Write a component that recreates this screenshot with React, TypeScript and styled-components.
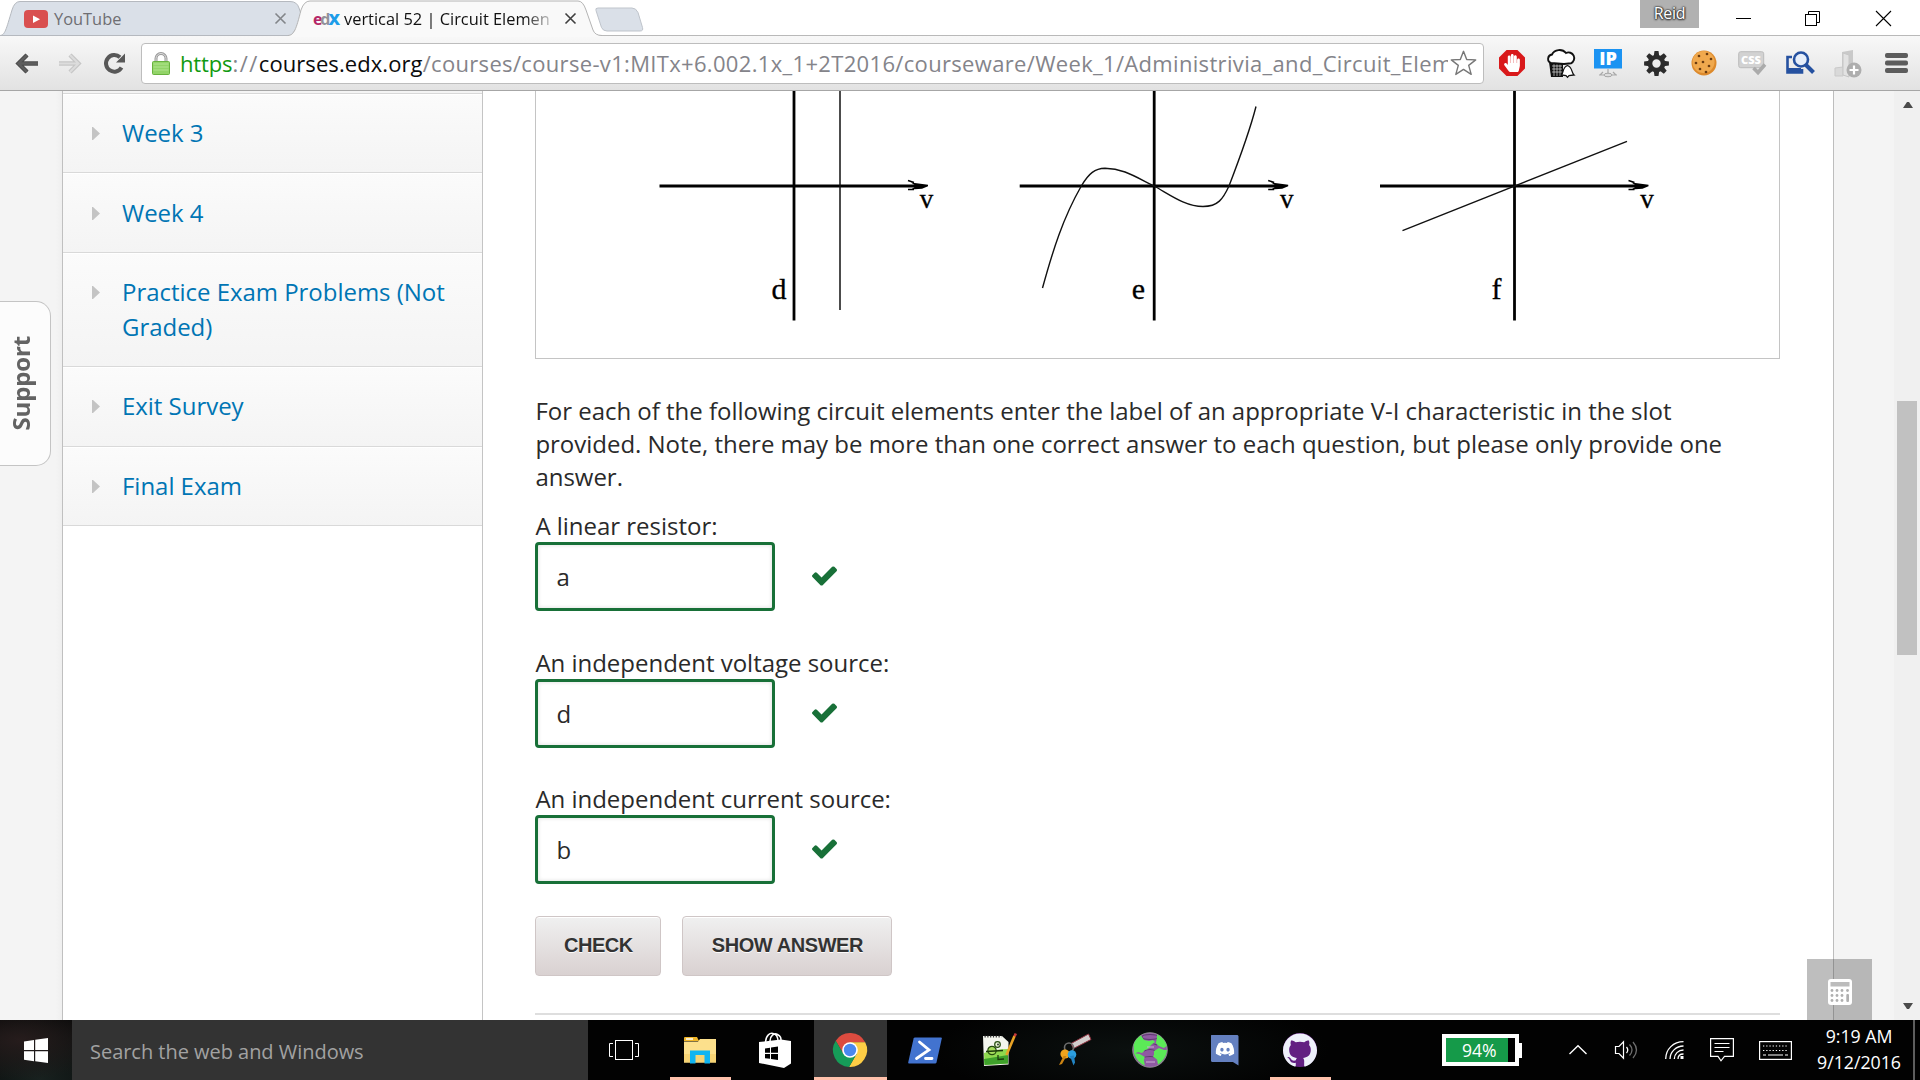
import React from 'react';
import styled, { createGlobalStyle } from 'styled-components';
import { FaHandPaper, FaDiscord } from 'react-icons/fa';
import { SiGithub } from 'react-icons/si';

const Global = createGlobalStyle`
  *, *::before, *::after { box-sizing: border-box; }
  body { margin: 0; background: #fff; overflow: hidden; }
  svg { display: block; flex: none; overflow: visible; }
`;

const sans = `"Open Sans", "Noto Sans", sans-serif`;

const Desktop = styled.div`
  width: 1920px;
  height: 1080px;
  display: flex;
  flex-direction: column;
  overflow: hidden;
  font-family: ${sans};
`;

/* ---------- tab strip ---------- */

const TabStrip = styled.header`
  height: 36px;
  flex: none;
  display: flex;
  justify-content: space-between;
  background: #fff;
  border-bottom: 1px solid #b9b9b9;
`;

const Tabs = styled.div`
  display: flex;
  height: 36px;
`;

const Tab = styled.div<{ $active?: boolean }>`
  position: relative;
  z-index: ${p => (p.$active ? 2 : 1)};
  width: ${p => (p.$active ? 314 : 303)}px;
  margin-left: ${p => (p.$active ? -15 : 0)}px;
  padding: 0 ${p => (p.$active ? 26 : 17)}px 0 ${p => (p.$active ? 25 : 24)}px;
  height: 37px;
  display: flex;
  align-items: center;
  color: ${p => (p.$active ? '#111' : '#6e6e72')};
`;

const TabShape = styled.svg`
  position: absolute;
  left: 0;
  top: 0;
  z-index: -1;
`;

const TabTitle = styled.span<{ $fade?: boolean }>`
  flex: 1;
  margin-left: 6px;
  white-space: nowrap;
  font-size: 16.4px;
  line-height: 24px;
  ${p => p.$fade && 'margin-right: 12px; -webkit-mask-image: linear-gradient(90deg, #000 86%, rgba(0,0,0,.15) 100%); mask-image: linear-gradient(90deg, #000 86%, rgba(0,0,0,.15) 100%);'}
`;

const EdxMark = styled.span`
  width: 25px;
  display: flex;
  font: 700 16px/20px ${sans};
  letter-spacing: -1.1px;
  i { font-style: normal; }
  i:nth-child(1) { color: #b52667; }
  i:nth-child(2) { color: #93929a; margin-left: -1px; }
  i:nth-child(3) { color: #1d9de9; margin-left: -1px; font-weight: 800; }
`;

const WindowControls = styled.div`
  display: flex;
  align-items: flex-start;
  height: 35px;
`;

const UserBadge = styled.div`
  width: 59px;
  height: 28px;
  background: #b1b1b1;
  color: #fff;
  font-size: 16px;
  line-height: 26px;
  text-align: center;
  letter-spacing: -0.3px;
  text-shadow: 0 0 2px #333, 0 0 2px #333, 0 1px 2px #333, 1px 0 1px #555;
`;

const ControlSlot = styled.div<{ $w: number }>`
  width: ${p => p.$w}px;
  height: 36px;
  display: flex;
  align-items: center;
  justify-content: center;
`;

const CloseSlot = styled(ControlSlot)`
  padding-left: 10px;
`;

/* ---------- toolbar ---------- */

const Toolbar = styled.div`
  height: 55px;
  flex: none;
  display: flex;
  align-items: center;
  background: linear-gradient(#f8f8f8, #e2e2e2);
  border-bottom: 1px solid #a6a6a6;
`;

const NavButtons = styled.div`
  width: 141px;
  padding-left: 15px;
  display: flex;
  align-items: center;
`;

const ForwardWrap = styled.span`
  margin: 0 22px 0 19px;
`;

const Omnibox = styled.div`
  width: 1343px;
  height: 41px;
  display: flex;
  align-items: center;
  background: #fff;
  border: 1px solid #bdbdbd;
  border-radius: 4px;
  padding: 0 6px 0 10px;
`;

const Url = styled.span`
  flex: 1;
  min-width: 0;
  margin: 0 2px 0 10px;
  overflow: hidden;
  white-space: nowrap;
  font-size: 22px;
  line-height: 34px;
  letter-spacing: 0.33px;
  color: #84848a;
  b { font-weight: 400; color: #0b0b0b; letter-spacing: 0.08px; }
  em { font-style: normal; color: #109a10; letter-spacing: -0.15px; }
  i { font-style: normal; letter-spacing: 1.5px; }
`;

const Extensions = styled.div`
  flex: 1;
  padding-left: 4px;
  display: flex;
  align-items: center;
`;

const Ext = styled.div`
  width: 48px;
  height: 30px;
  display: flex;
  align-items: center;
  justify-content: center;
`;

const StopBadge = styled.span`
  width: 26px;
  height: 26px;
  display: flex;
  align-items: center;
  justify-content: center;
  color: #fff;
  background: #d9191b;
  clip-path: polygon(29% 0, 71% 0, 100% 29%, 100% 71%, 71% 100%, 29% 100%, 0 71%, 0 29%);
`;

/* ---------- page ---------- */

const Page = styled.div`
  flex: 1;
  min-height: 0;
  display: flex;
  background: #f4f4f4;
`;

const LeftGutter = styled.div`
  width: 62px;
  padding-top: 210px;
  background: linear-gradient(90deg, #f4f4f4 90%, #efefef);
`;

const SupportTab = styled.div`
  width: 51px;
  height: 165px;
  border: 1px solid #c4c4c4;
  border-left: 0;
  border-radius: 0 15px 15px 0;
  background: #fcfcfc;
  display: flex;
  align-items: center;
  justify-content: center;
  padding-right: 8px;
`;

const SupportLabel = styled.span`
  writing-mode: vertical-rl;
  transform: rotate(180deg);
  font-size: 24px;
  font-weight: 700;
  letter-spacing: -0.15px;
  line-height: 32px;
  color: #636363;
`;

const Sidebar = styled.nav`
  width: 420.5px;
  border-left: 1px solid #c0c0c0;
  border-right: 1px solid #c4c4c4;
  background: #fff;
`;

const SidebarEdge = styled.div`
  height: 3px;
  background: #f4f4f4;
  border-bottom: 1px solid #d8d8d8;
`;

const Chapter = styled.a`
  display: flex;
  padding: 21.3px 24px 22.1px 29px;
  border-bottom: 1px solid #d9d9d9;
  box-shadow: inset 0 1px 0 #fff;
  background: linear-gradient(#fbfbfb, #f4f4f4);
  color: #0075b4;
  font-size: 24px;
  line-height: 35px;
  letter-spacing: -0.03px;
`;

const Caret = styled.svg`
  margin: 12px 22px 0 0;
`;

const ChapterTitle = styled.span`
  flex: 1;
`;

const Content = styled.main`
  width: 1351.5px;
  padding-left: 52.9px;
  background: #fff;
  border-right: 1px solid #bdbdbd;
  color: #2a2a2a;
`;

const Figure = styled.div`
  width: 1245px;
  height: 268px;
  border: 1px solid #c4c4c4;
  border-top: 0;
`;

const Prompt = styled.p`
  margin: 35px 0 16.4px;
  width: 1245px;
  font-size: 24px;
  line-height: 33px;
  letter-spacing: -0.02px;
`;

const Question = styled.label`
  display: block;
  font-size: 24px;
  line-height: 33px;
  height: 136.4px;
  letter-spacing: -0.02px;
`;

const AnswerRow = styled.span`
  display: flex;
  align-items: center;
`;

const AnswerBox = styled.span`
  width: 240px;
  height: 69px;
  padding: 0 18px;
  border: 3px solid #187038;
  border-radius: 4px;
  box-shadow: inset 0 0 4px rgba(0, 0, 0, 0.14);
  line-height: 64px;
`;

const CheckMark = styled.svg`
  margin: -1px 0 0 36.6px;
`;

const Actions = styled.div`
  display: flex;
  gap: 21px;
  margin-top: -2.6px;
`;

const ActionButton = styled.button<{ $w: number }>`
  width: ${p => p.$w}px;
  height: 60px;
  padding: 0 0 1.5px 0;
  border: 1px solid #cfc6c6;
  border-radius: 4px;
  background: linear-gradient(#f0f0f0, #d9d1d1);
  box-shadow: inset 0 1px 0 #fff;
  color: #333;
  font: 700 20px "Liberation Sans", Arial, sans-serif;
  letter-spacing: -0.42px;
  text-shadow: 0 1px 0 #fcfbfb;
  white-space: nowrap;
`;

const Divider = styled.hr`
  width: 1245px;
  margin: 37px 0 0;
  border: 0;
  height: 2px;
  background: #dedede;
`;

const RightGutter = styled.aside`
  flex: 1;
  display: flex;
  align-items: flex-end;
`;

const CalculatorTab = styled.div`
  position: relative;
  width: 65px;
  height: 61px;
  margin-left: -27px;
  background: rgba(70, 70, 70, 0.35);
  display: flex;
  justify-content: center;
  padding-top: 20px;
`;

const Scrollbar = styled.div`
  width: 26px;
  background: #f0f0f0;
  display: flex;
  flex-direction: column;
  align-items: center;
  justify-content: space-between;
  padding: 11px 0;
  padding-left: 2px;
`;

const ScrollThumb = styled.div`
  width: 20px;
  height: 254px;
  margin: 293px 2px auto 0;
  background: #c1c1c1;
`;

/* ---------- taskbar ---------- */

const Taskbar = styled.footer`
  height: 60px;
  flex: none;
  display: flex;
  background:
    radial-gradient(ellipse 200px 50px at 1130px 30px, #0b100f, transparent),
    radial-gradient(ellipse 90px 40px at 20px 20px, #261c1c, transparent),
    radial-gradient(ellipse 120px 80px at 40px 60px, #18211f, transparent),
    #020202;
`;

const StartButton = styled.div`
  width: 72px;
  display: flex;
  align-items: center;
  justify-content: center;
`;

const SearchBox = styled.div`
  width: 516px;
  padding-left: 18px;
  background: #333;
  color: #a2a2a2;
  font-size: 20px;
  line-height: 63px;
  letter-spacing: -0.03px;
`;

const Apps = styled.div`
  flex: 1;
  display: flex;
  padding-left: 1px;
  gap: 2px;
`;

const AppButton = styled.div<{ $focus?: boolean; $open?: boolean }>`
  width: 73px;
  height: 60px;
  padding-right: 2px;
  display: flex;
  align-items: center;
  justify-content: center;
  background: ${p => (p.$focus ? '#343434' : 'none')};
  ${p => p.$focus && 'box-shadow: inset 0 -3px 0 #ffc1ab;'}
  ${p => p.$open && 'background: linear-gradient(#ffc1ab, #ffc1ab) 6px 57px / 61px 3px no-repeat;'}
`;

const Tray = styled.div`
  width: 480px;
  display: flex;
  align-items: center;
  padding-left: 2px;
`;

const Battery = styled.div`
  display: flex;
  align-items: center;
  width: 112px;
`;

const BatteryBody = styled.div`
  width: 77px;
  height: 32px;
  border: 4px solid #fff;
  background: linear-gradient(90deg, #159a49 62px, #000 62px);
  color: #fff;
  font-size: 17.6px;
  line-height: 24px;
  padding-left: 16px;
`;

const BatteryTip = styled.div`
  width: 3px;
  height: 15px;
  background: #fff;
`;

const TraySlot = styled.div<{ $w: number }>`
  width: ${p => p.$w}px;
  display: flex;
  justify-content: center;
`;

const Clock = styled.div`
  width: 108px;
  color: #fff;
  font-size: 17.8px;
  line-height: 26px;
  text-align: center;
  padding-bottom: 3px;
  letter-spacing: -0.05px;
`;

const PeekLine = styled.div`
  width: 2px;
  height: 60px;
  background: #5d5d5d;
`;

/* ---------- drawings ---------- */

const Close = ({ color, size = 11 }: { color: string; size?: number }) => (
  <svg width={size} height={size} viewBox="0 0 11 11">
    <path d="M.5.5l10 10M10.5.5l-10 10" stroke={color} strokeWidth="1.6" />
  </svg>
);

const BackArrow = ({ color, edge }: { color: string; edge: string }) => (
  <svg width="24" height="21" viewBox="0 0 24 21">
    <path d="M12 2L3.500 10.500L12 19M4 10.500H23" fill="none" stroke={color} strokeWidth="4.400" />
    <path d="M12 2L3.500 10.500L12 19M4 10.500H23" fill="none" stroke={edge} strokeWidth="2.400" />
  </svg>
);

const Reload = () => (
  <svg width="22" height="21" viewBox="0 0 22 21">
    <path d="M17.500 14.500A8.300 8.300 0 1 1 16 4.300" fill="none" stroke="#585858" strokeWidth="4" />
    <path d="M21 .5V9.500H12Z" fill="#585858" />
  </svg>
);

const Lock = () => (
  <svg width="18" height="23" viewBox="0 0 18 23">
    <path d="M4 11V6.500a5 5 0 0 1 10 0V11" fill="none" stroke="#9a9a9a" strokeWidth="3" />
    <path d="M4 11V6.500a5 5 0 0 1 10 0V11" fill="none" stroke="#dedede" strokeWidth="1" />
    <rect x=".5" y="9.500" width="17" height="13" rx="1" fill="#92d468" stroke="#68b23e" />
    <path d="M1.500 12h15M1.500 15h15M1.500 18h15" stroke="#b2e48f" strokeWidth="1" />
  </svg>
);

const Star = () => (
  <svg width="27" height="26" viewBox="0 0 27 26">
    <path d="M13.500 1.300l3.200 8.200 9 .4-7 5.500 2.500 9-7.700-5-7.700 5 2.500-9-7-5.500 9-.4z" fill="#fff" stroke="#777" strokeWidth="1.400" strokeLinejoin="round" />
  </svg>
);

const Storm = () => (
  <svg width="29" height="29" viewBox="0 0 29 29">
    <path d="M3 13h14v15H5z" fill="#111" />
    <path d="M6 17h10M6 20h10M6 23h10M8 15v12M11 15v12M14 15v12" stroke="#ddd" strokeWidth=".7" />
    <path d="M5 14a4.400 4.400 0 0 1 1-8.500A8 7 0 0 1 20 4a5.500 5.500 0 0 1 5 10.300L18 15z" fill="#fff" stroke="#111" strokeWidth="1.900" />
    <path d="M15.500 26c2-2 1-8 6-9.500 5 1.500 4 7.500 6.500 9.500l-5 .5-1.500 1.800-1.500-1.800z" fill="#fff" stroke="#111" strokeWidth="1.300" />
  </svg>
);

const IpScreen = () => (
  <svg width="28" height="29" viewBox="0 0 28 29">
    <rect width="28" height="19.500" fill="#1b93f2" />
    <text x="14" y="16" textAnchor="middle" fontFamily="Open Sans" fontWeight="800" fontSize="18" fill="#fff">IP</text>
    <path d="M14 20v8M5 26h18M9 23l-3 3M19 23l3 3" stroke="#a9a9a9" strokeWidth="1.200" />
    <ellipse cx="14" cy="26" rx="4" ry="1.800" fill="#ddd" stroke="#999" strokeWidth=".8" />
  </svg>
);

const Gear = () => (
  <svg width="25" height="25" viewBox="-12.500 -12.500 25 25">
    {[0, 45, 90, 135, 180, 225, 270, 315].map(a => (
      <path key={a} d="M-2.800-7L-2-12.400H2L2.800-7z" fill="#2c2c2c" transform={`rotate(${a})`} />
    ))}
    <circle r="6.500" fill="none" stroke="#2c2c2c" strokeWidth="4.600" />
  </svg>
);

const Cookie = () => (
  <svg width="26" height="26" viewBox="0 0 26 26">
    <circle cx="13" cy="13" r="12.500" fill="#dd8a2c" />
    <circle cx="12.500" cy="12" r="11" fill="#f0a94e" />
    {[[8, 6], [16, 4], [20, 9], [12, 12], [5, 13], [18, 16], [9, 19], [15, 22]].map(([x, y]) => (
      <circle key={`${x}-${y}`} cx={x} cy={y} r="1.350" fill="#6b3c10" />
    ))}
  </svg>
);

const CssBadge = () => (
  <svg width="28" height="24" viewBox="0 0 28 24">
    <rect x=".7" y=".7" width="25" height="16" rx="2" fill="#d2d2d2" stroke="#bcbcbc" />
    <text x="13" y="13" textAnchor="middle" fontFamily="Open Sans" fontWeight="800" fontSize="11" fill="#fff">CSS</text>
    <path d="M15.500 17l4.500 4.500 7-8" fill="none" stroke="#ababab" strokeWidth="3.600" />
  </svg>
);

const Finder = () => (
  <svg width="29" height="24" viewBox="0 0 29 24">
    <path d="M6 6H1.500v15.500H16V18" fill="none" stroke="#2551a0" strokeWidth="2.600" />
    <path d="M2 17h13v4H2z" fill="#2551a0" />
    <circle cx="15" cy="8.500" r="7" fill="#e6eefa" stroke="#2551a0" strokeWidth="2.600" />
    <path d="M20 14l7.500 7.500" stroke="#2551a0" strokeWidth="4" />
  </svg>
);

const FolderPlus = () => (
  <svg width="28" height="29" viewBox="0 0 28 29">
    <path d="M8 3l11-2v22H8z" fill="#c9c9c9" />
    <path d="M1 19l8-1v9H1z" fill="#d9d9d9" stroke="#c9c9c9" />
    <path d="M9 4l6 2v22l-6-2z" fill="#e2e2e2" stroke="#c6c6c6" />
    <circle cx="20" cy="21" r="7.500" fill="#aeaeae" />
    <path d="M20 16.500v9M15.500 21h9" stroke="#fff" strokeWidth="2.200" />
  </svg>
);

const MenuBars = () => (
  <svg width="23" height="20" viewBox="0 0 23 20">
    {[0, 7.500, 15].map(y => <rect key={y} y={y} width="23" height="5" rx="2" fill="#5c5c5c" />)}
  </svg>
);

const Axes = ({ x, label, lx }: { x: number; label: string; lx: number }) => (
  <g>
    <path d={`M${x} 91V320.500`} stroke="#000" strokeWidth="2.800" />
    <path d={`M${x - 134.500} 186H${x + 128}`} stroke="#000" strokeWidth="2.800" />
    <path d={`M${x + 114} 180.500L${x + 120} 182.500M${x + 120} 189.500H${x + 114}`} fill="none" stroke="#000" strokeWidth="1.500" />
    <path d={`M${x + 117} 182.500L${x + 134} 184.800V186.300L${x + 128} 188.800L${x + 117} 189.500L${x + 122} 186z`} />
    <text x={x + 132.500} y="208" textAnchor="middle" fontSize="27" stroke="#000" strokeWidth=".3">v</text>
    <text x={lx} y="298.500" textAnchor="middle" fontSize="30" stroke="#000" strokeWidth=".3">{label}</text>
  </g>
);

const Characteristics = () => (
  <svg width="1243" height="267" viewBox="537 91 1243 267" fontFamily='"Liberation Serif", serif'>
    <Axes x={795} label="d" lx={780} />
    <path d="M841 91V310" stroke="#111" strokeWidth="1.500" />
    <Axes x={1155.200} label="e" lx={1139.500} />
    <path
      d="M1043.500 288C1054 250 1064 218 1082.300 186C1090 173 1096 168.500 1106 168.300C1124 168.500 1135 176 1155 186C1170 194 1186 206.500 1204 206.500C1219 206.500 1224 199 1230 186C1240 160 1251 130 1257 106.500"
      fill="none" stroke="#111" strokeWidth="1.400"
    />
    <Axes x={1515.500} label="f" lx={1497.500} />
    <path d="M1403.500 230.700L1628 141.300" stroke="#111" strokeWidth="1.400" />
  </svg>
);

const Check = () => (
  <CheckMark width="25" height="20" viewBox="121 334 1550 1188">
    <path fill="#187038" d="M1671 566q0 40-28 68l-724 724-136 136q-28 28-68 28t-68-28l-136-136-362-362q-28-28-28-68t28-68l136-136q28-28 68-28t68 28l294 295 656-657q28-28 68-28t68 28l136 136q28 28 28 68z" />
  </CheckMark>
);

const Calculator = () => (
  <svg width="24" height="26" viewBox="0 0 24 26">
    <rect width="24" height="26" rx="3" fill="#fff" />
    <rect x="2.500" y="3" width="19" height="4.500" fill="#bcbcbc" />
    {[11.500, 16.500, 21.500].map(y => [4, 9, 14].map(x => <circle key={`${x}-${y}`} cx={x} cy={y} r="1.400" fill="#b0b0b0" />))}
    <circle cx="19.500" cy="11.500" r="1.400" fill="#b0b0b0" />
    <rect x="18.300" y="15" width="2.700" height="8" rx="1" fill="#b0b0b0" />
  </svg>
);

const WindowsLogo = () => (
  <svg width="24" height="25" viewBox="0 0 24 25" fill="#fff">
    <path d="M0 3.500L10 2v10H0zM11.200 1.800L24 0v12H11.200zM0 13.200h10v10L0 21.800zM11.200 13.200H24V25l-12.800-1.800z" />
  </svg>
);

const TaskView = () => (
  <svg width="32" height="20" viewBox="0 0 32 20" fill="none" stroke="#fff">
    <rect x="6.500" y=".5" width="17" height="19" />
    <path d="M4 3.500H.5v13H4M26 3.500h3.500v13H26" />
  </svg>
);

const Folder = () => (
  <svg width="32" height="27" viewBox="0 0 32 27">
    <path d="M0 1q0-1 1-1h12l2 4H0z" fill="#f0b62a" />
    <path d="M2 2h7" stroke="#fff" strokeWidth="1.500" />
    <path d="M0 4.500h14l2-2.500h16V25.500H0z" fill="#fce08c" />
    <path d="M0 17h32v8.500H0z" fill="#f7d474" />
    <path d="M6 26.500V13.500h20v13h-5.500v-8.500h-9v8.500z" fill="#12b5f0" />
  </svg>
);

const StoreBag = () => (
  <svg width="32" height="36" viewBox="0 0 32 36">
    <path d="M6.500 10C7 3 11 .8 14 1.500s5 4 5 8M11 9c0-5 4-8.500 7.500-6.500S22 6 22 9" fill="none" stroke="#fff" strokeWidth="1.500" />
    <path d="M0 10l22-2.500 10 1.500v22.500L25 36 0 31z" fill="#fff" />
    <path d="M6 16.500l5-.7v5H6zM12 15.600l7-1v6.200h-7zM6 22h5v4.800l-5-.6zM12 22h7v6l-7-1z" fill="#000" />
  </svg>
);

const ChromeLogo = () => (
  <svg width="34" height="34" viewBox="-17 -17 34 34">
    {[['#db4b3f', 0], ['#fdcd45', 120], ['#169c58', 240]].map(([c, a]) => (
      <path key={c} fill={c as string} transform={`rotate(${a})`} d="M15.200-7.700A17 17 0 0 0-14.270-9.310L-6.670 3.850L0 0V-7.700z" />
    ))}
    <circle r="7.800" fill="#fff" />
    <circle r="6.200" fill="#4a88ee" />
  </svg>
);

const PowerShell = () => (
  <svg width="34" height="27" viewBox="0 0 34 27">
    <path d="M7 .5h26q1 0 .8 1L28.500 25.500q-.3 1-1.300 1H1q-1 0-.8-1L5.600 1.500Q6 .5 7 .5z" fill="#4273cf" />
    <path d="M11.500 5l9.500 8-12.500 8.500M17.500 21.500h6.500" fill="none" stroke="#fff" strokeWidth="2.800" strokeLinecap="round" />
  </svg>
);

const Notepad = () => (
  <svg width="34" height="34" viewBox="0 0 34 34">
    <path d="M0 3h19l6.500 6V31.500L1 33z" fill="#f4f6ee" />
    <path d="M1 20q12-4 24-4v14.500L1.500 32z" fill="#8fd94f" />
    <path d="M1 26l24-4v8.500L1.500 32z" fill="#3fa12b" />
    <path d="M1.500 3.500h17" stroke="#333" strokeWidth="2" strokeDasharray="1.200 1.600" />
    <circle cx="9" cy="17.500" r="4.200" fill="#a5dd5c" stroke="#274d10" strokeWidth="1.200" />
    <circle cx="14.500" cy="11.500" r="2.800" fill="#e8f7d4" stroke="#274d10" strokeWidth="1.200" />
    <circle cx="15" cy="11.500" r=".9" fill="#222" />
    <path d="M3 18.500l17-1M15 22v4.500l6-.5" fill="none" stroke="#1b3a0b" strokeWidth="1.300" />
    <path d="M31.500 3l-8 19" stroke="#e8a225" strokeWidth="2.600" />
    <path d="M32.800.5l-1.200 2.800" stroke="#c93b3b" strokeWidth="2.600" />
  </svg>
);

const Keys = () => (
  <svg width="33" height="33" viewBox="0 0 33 33">
    <path d="M13 9.500L30.500 0l2.500 5.500-17.500 9z" fill="#d3cdcd" stroke="#8d3340" />
    <circle cx="11" cy="13.500" r="4.500" fill="none" stroke="#6e6e6e" strokeWidth="1.600" />
    <circle cx="7" cy="20" r="4.600" fill="#efa41d" />
    <path d="M5.500 22L1 31l3-1 4.500-8z" fill="#cc8413" />
    <circle cx="14" cy="20.500" r="4.300" fill="#2b9fe0" />
    <path d="M12 22l3.500 9.500 1.500-3-1-7z" fill="#2184c4" />
  </svg>
);

const Globe = () => (
  <svg width="36" height="36" viewBox="-18 -18 36 36">
    <circle r="17.300" fill="#8f5aa2" stroke="#9a9a9a" strokeWidth=".8" />
    <g fill="none" stroke="#5e3a70" strokeWidth="1.100">
      <ellipse cy="-13" rx="8" ry="2.500" /><path d="M-7-5q7-3 14 0M-6 1q6-3 12 0M-8 8q8-3 16 0" />
    </g>
    <g fill="#5bea57">
      <path d="M-16.300-5C-15-10-12-13-9-14.500l3 4.500 5 1 4-1 2 2-4 3-3 4-3 1-3 3-4-1-4 2z" />
      <path d="M-16.200 3l6 1 5 3-1 3 1 5.500q-7-2-11-12.500z" />
      <path d="M7-15.300c5 2 8.500 6 9.800 11.300l-3 2-5-2-3-3 1-4z" />
      <path d="M4 1l5-3 5 2h3c-1 7-4 11-9 14.500l-1-5-4-3 1-2z" />
    </g>
    <path d="M-4 12h9M-3-3H4" stroke="#cbb0d4" strokeWidth="1" />
  </svg>
);

const DiscordBubble = styled.span`
  width: 28px;
  height: 31px;
  padding: 4px 0 0 4px;
  background: #6480c0;
  color: #fff;
  clip-path: polygon(0 5%, 5% 0, 95% 0, 100% 5%, 100% 100%, 80% 89%, 5% 89%, 0 84%);
`;

const GithubBadge = styled.span`
  width: 34px;
  height: 34px;
  border-radius: 50%;
  background: #632082;
  color: #eef0fa;
`;

const Chevron = () => (
  <svg width="18" height="10" viewBox="0 0 18 10"><path d="M.5 9L9 .8 17.500 9" fill="none" stroke="#fff" strokeWidth="1.400" /></svg>
);

const Speaker = () => (
  <svg width="23" height="18" viewBox="0 0 23 18" fill="none">
    <path d="M.5 5.500H4L8.500 .8v16.400L4 12.500H.5z" stroke="#fff" strokeWidth="1.200" />
    <path d="M11.500 6q2.500 3 0 6" stroke="#fff" strokeWidth="1.300" />
    <path d="M14.500 3.500q5 5.500 0 11M18 1q7 8 0 16" stroke="#6d6d6d" strokeWidth="1.300" />
  </svg>
);

const Wifi = () => (
  <svg width="19" height="18" viewBox="0 0 19 18" fill="none" stroke="#fff" strokeWidth="1.300">
    <path d="M.7 18C.7 8 8.500.7 18.500.7M5 18c0-7 6-13 13.500-13M9.300 18c0-5 4-9 9.200-9M13 18c0-3 2-5 5.500-5" />
    <rect x="15.500" y="15" width="3" height="3" fill="#fff" stroke="none" />
  </svg>
);

const Notice = () => (
  <svg width="24" height="24" viewBox="0 0 24 24" fill="none" stroke="#fff" strokeWidth="1.200">
    <path d="M.6.600h22.800v17.800H14.500L11 22.800l-3-4.400H.6zM4.500 5.500h15M4.500 9.500h15M4.500 13.500h9" />
  </svg>
);

const Keyboard = () => (
  <svg width="33" height="19" viewBox="0 0 33 19" fill="none" stroke="#fff" strokeWidth="1.200">
    <rect x=".6" y=".6" width="31.800" height="17.800" />
    <path d="M4 5h25M4 9.500h25" strokeDasharray="1.300 1.900" />
    <path d="M4 14h3M9 14h15M26 14h3" />
  </svg>
);

const chapters = ['Week 3', 'Week 4', 'Practice Exam Problems (Not Graded)', 'Exit Survey', 'Final Exam'];
const questions = [
  ['A linear resistor:', 'a'],
  ['An independent voltage source:', 'd'],
  ['An independent current source:', 'b'],
];

export default function App() {
  return (
    <Desktop>
      <Global />
      <TabStrip>
        <Tabs>
          <Tab>
            <TabShape width="303" height="36" viewBox="0 0 303 36">
              <path d="M0 35.500C5 35 6 30 12 10Q14.500 1.500 20 1.500H290Q297 1.500 299 8L303 20L291 35.500z" fill="#dae0e8" stroke="#b5b9bf" />
            </TabShape>
            <svg width="24" height="18" viewBox="0 0 24 18">
              <rect width="24" height="18" rx="4" fill="#d94f4f" /><path d="M9 5.500v7.500l7-3.700z" fill="#fff" />
            </svg>
            <TabTitle>YouTube</TabTitle>
            <Close color="#828589" />
          </Tab>
          <Tab $active>
            <TabShape width="314" height="37" viewBox="0 0 314 37">
              <path d="M0 35.500C6 35 8 30 13 10Q16 1 22 1H290Q295 1 298 10L305 30Q307 35.500 314 35.500V37H0z" fill="#f9f9f9" />
              <path d="M0 35.500C6 35 8 30 13 10Q16 1 22 1H290Q295 1 298 10L305 30Q307 35.500 314 35.500" fill="none" stroke="#b4b4b4" />
            </TabShape>
            <EdxMark><i>e</i><i>d</i><i>X</i></EdxMark>
            <TabTitle $fade>vertical 52 | Circuit Elemen</TabTitle>
            <Close color="#3f3f3f" />
          </Tab>
          <svg width="50" height="33" viewBox="0 0 50 33">
            <path d="M-4 8H30Q34 8 36 12.500L40.500 27.500Q41.500 31 38 31H5Q1 31-.5 27.500L-6 10.500Q-7 8-4 8z" fill="#dae0e8" stroke="#bfc4cb" />
          </svg>
        </Tabs>
        <WindowControls>
          <UserBadge>Reid</UserBadge>
          <ControlSlot $w={89}><svg width="15" height="1"><rect width="15" height="1" /></svg></ControlSlot>
          <ControlSlot $w={49}>
            <svg width="15" height="15" viewBox="0 0 15 15" fill="none" stroke="#000"><rect x=".5" y="3.500" width="11" height="11" /><path d="M3.500 3.500v-3h11v11h-3" /></svg>
          </ControlSlot>
          <CloseSlot $w={83}>
            <svg width="15" height="15" viewBox="0 0 15 15"><path d="M0 0l15 15M15 0L0 15" stroke="#000" strokeWidth="1.100" /></svg>
          </CloseSlot>
        </WindowControls>
      </TabStrip>

      <Toolbar>
        <NavButtons>
          <BackArrow color="#4c4c4c" edge="#5e5e5e" />
          <ForwardWrap>
            <svg width="24" height="21" viewBox="0 0 24 21">
              <path d="M12 2l8.500 8.500L12 19M20 10.500H1" fill="none" stroke="#c6c6c6" strokeWidth="4.400" />
              <path d="M12 2l8.500 8.500L12 19M20 10.500H1" fill="none" stroke="#dcdcdc" strokeWidth="2" />
            </svg>
          </ForwardWrap>
          <Reload />
        </NavButtons>
        <Omnibox>
          <Lock />
          <Url>
            <em>https</em><i>://</i><b>courses.edx.org</b>/courses/course-v1:MITx+6.002.1x_1+2T2016/courseware/Week_1/Administrivia_and_Circuit_Elem
          </Url>
          <Star />
        </Omnibox>
        <Extensions>
          <Ext><StopBadge><FaHandPaper size={18} /></StopBadge></Ext>
          <Ext><Storm /></Ext>
          <Ext><IpScreen /></Ext>
          <Ext><Gear /></Ext>
          <Ext><Cookie /></Ext>
          <Ext><CssBadge /></Ext>
          <Ext><Finder /></Ext>
          <Ext><FolderPlus /></Ext>
          <Ext><MenuBars /></Ext>
        </Extensions>
      </Toolbar>

      <Page>
        <LeftGutter>
          <SupportTab><SupportLabel>Support</SupportLabel></SupportTab>
        </LeftGutter>
        <Sidebar>
          <SidebarEdge />
          {chapters.map(title => (
            <Chapter key={title}>
              <Caret width="8" height="13" viewBox="0 0 8 13"><path d="M0 0h1l7 6.500L1 13H0z" fill="#c4c4c4" /></Caret>
              <ChapterTitle>{title}</ChapterTitle>
            </Chapter>
          ))}
        </Sidebar>
        <Content>
          <Figure><Characteristics /></Figure>
          <Prompt>
            For each of the following circuit elements enter the label of an appropriate V-I characteristic in the slot
            provided. Note, there may be more than one correct answer to each question, but please only provide one
            answer.
          </Prompt>
          {questions.map(([label, answer]) => (
            <Question key={label}>
              {label}
              <AnswerRow><AnswerBox>{answer}</AnswerBox><Check /></AnswerRow>
            </Question>
          ))}
          <Actions>
            <ActionButton $w={126}>CHECK</ActionButton>
            <ActionButton $w={210}>SHOW ANSWER</ActionButton>
          </Actions>
          <Divider />
        </Content>
        <RightGutter>
          <CalculatorTab><Calculator /></CalculatorTab>
        </RightGutter>
        <Scrollbar>
          <svg width="10" height="6" viewBox="0 0 10 6"><path d="M0 6L4 0h2l4 6z" fill="#4b4b4b" /></svg>
          <ScrollThumb />
          <svg width="10" height="6" viewBox="0 0 10 6"><path d="M0 0h10L6 6H4z" fill="#4b4b4b" /></svg>
        </Scrollbar>
      </Page>

      <Taskbar>
        <StartButton><WindowsLogo /></StartButton>
        <SearchBox>Search the web and Windows</SearchBox>
        <Apps>
          <AppButton><TaskView /></AppButton>
          <AppButton $open><Folder /></AppButton>
          <AppButton><StoreBag /></AppButton>
          <AppButton $focus><ChromeLogo /></AppButton>
          <AppButton><PowerShell /></AppButton>
          <AppButton><Notepad /></AppButton>
          <AppButton><Keys /></AppButton>
          <AppButton><Globe /></AppButton>
          <AppButton><DiscordBubble><FaDiscord size={20} /></DiscordBubble></AppButton>
          <AppButton $open><GithubBadge><SiGithub size={34} /></GithubBadge></AppButton>
        </Apps>
        <Tray>
          <Battery><BatteryBody>94%</BatteryBody><BatteryTip /></Battery>
          <TraySlot $w={48}><Chevron /></TraySlot>
          <TraySlot $w={48}><Speaker /></TraySlot>
          <TraySlot $w={49}><Wifi /></TraySlot>
          <TraySlot $w={46}><Notice /></TraySlot>
          <TraySlot $w={60}><Keyboard /></TraySlot>
          <Clock>9:19 AM<br />9/12/2016</Clock>
          <PeekLine />
        </Tray>
      </Taskbar>
    </Desktop>
  );
}
